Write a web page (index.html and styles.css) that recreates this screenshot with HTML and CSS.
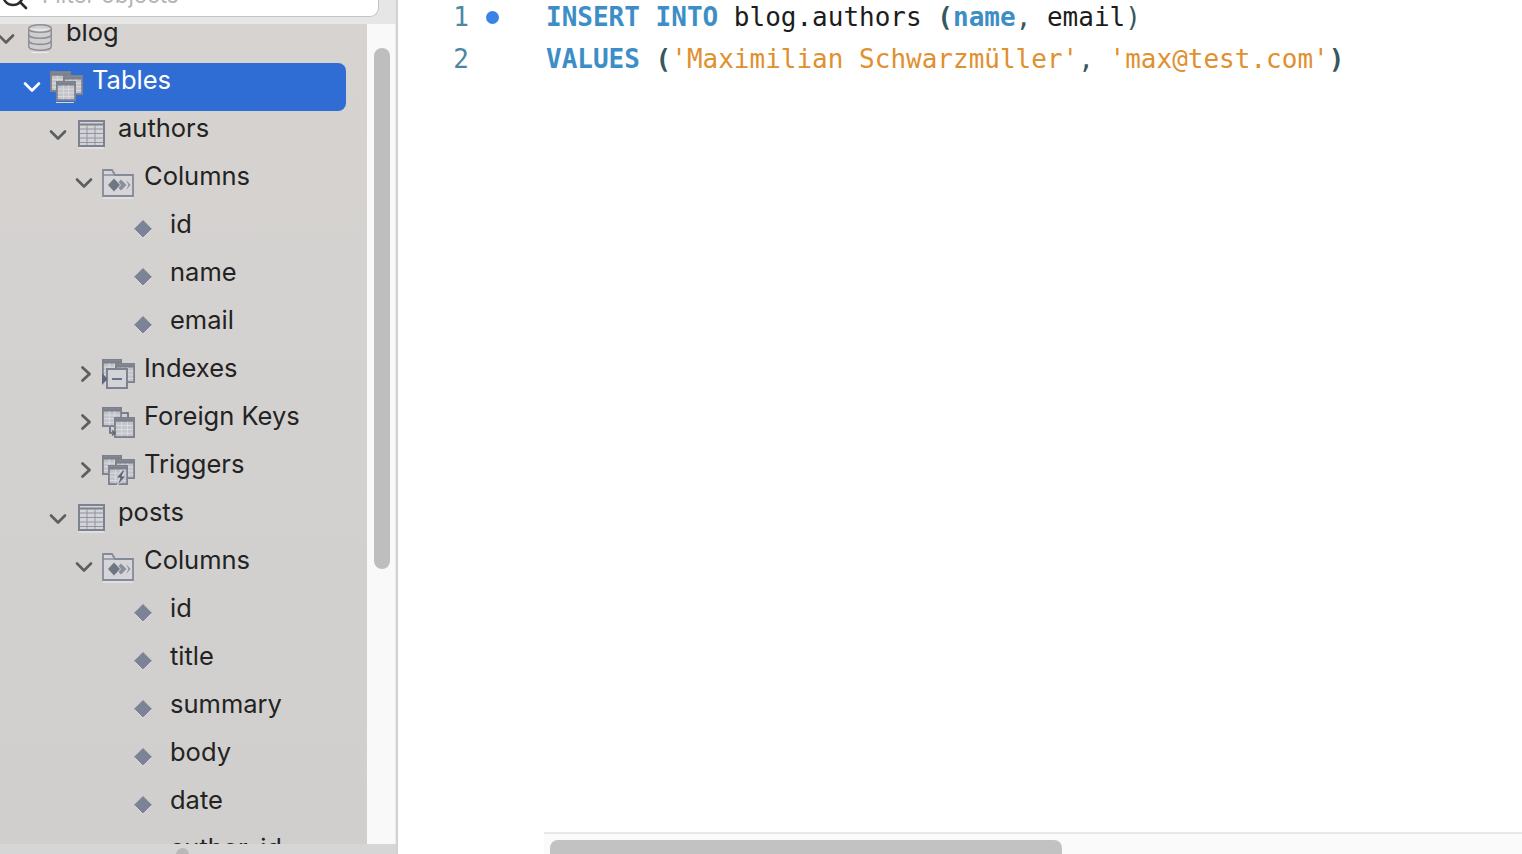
FILE: index.html
```html
<!DOCTYPE html>
<html lang="en">
<head>
<meta charset="utf-8">
<title>SQL editor</title>
<link rel="stylesheet" href="styles.css">
</head>
<body>
<svg class="defs" width="0" height="0" aria-hidden="true">
  <defs>
    <symbol id="down" viewBox="0 0 20 20"><path d="M3 6.5 L10 13.5 L17 6.5" fill="none" stroke="currentColor" stroke-width="2.6" stroke-linecap="round" stroke-linejoin="round"/></symbol>
    <symbol id="right" viewBox="0 0 20 20"><path d="M6.5 3.5 L13.5 10 L6.5 16.5" fill="none" stroke="currentColor" stroke-width="2.8" stroke-linecap="round" stroke-linejoin="round"/></symbol>
    <symbol id="db" viewBox="0 0 32 32">
      <path d="M4 6 C4 0.5 28 0.5 28 6 V25 C28 30.5 4 30.5 4 25Z" fill="#cfcfd1" stroke="#909094" stroke-width="1.6"/>
      <path d="M4 6 C4 11 28 11 28 6" fill="#e4e4e6" stroke="#909094" stroke-width="1.6"/>
      <path d="M4 12.5 C4 17.5 28 17.5 28 12.5 M4 19 C4 24 28 24 28 19" fill="none" stroke="#909094" stroke-width="1.8"/>
      <path d="M7 31.5 H25" stroke="#eeeeee" stroke-width="1"/>
    </symbol>
    <symbol id="grid" viewBox="0 0 22 22">
      <rect x="1" y="1" width="20" height="20" fill="#c2c4ca" stroke="#7d818c" stroke-width="2"/>
      <path d="M1 3.5 H21" stroke="#7d818c" stroke-width="3"/>
      <path d="M2 9 H20 M2 13 H20 M2 17 H20 M8 5 V20 M14 5 V20" stroke="#dcdde0" stroke-width="1"/>
    </symbol>
    <symbol id="table" viewBox="0 0 28 30">
      <rect x="1" y="2" width="25" height="25" fill="#d4d4d6" stroke="#7d8290" stroke-width="2"/>
      <path d="M1 5.5 H26" stroke="#7d8290" stroke-width="2"/>
      <path d="M2 10 H25 M2 14.5 H25 M2 19 H25 M2 23.5 H25 M9 6 V26 M17 6 V26" stroke="#8f95a3" stroke-width="1"/>
      <path d="M1 29 H26" stroke="#eeeeee" stroke-width="1"/>
    </symbol>
    <symbol id="tables" viewBox="0 0 34 32">
      <use href="#grid" x="1" y="0" width="21" height="21"/>
      <use href="#grid" x="14" y="4" width="20" height="20"/>
      <use href="#grid" x="7" y="10" width="20" height="20"/>
      <path d="M7 31.5 H25" stroke="#d8d8dc" stroke-width="1"/>
    </symbol>
    <symbol id="folder" viewBox="0 0 34 32">
      <path d="M2 29 V3 H11 L14 8 H32 V29Z" fill="#d6d6d9" stroke="#848a99" stroke-width="1.8"/>
      <path d="M2 8 H14" stroke="#848a99" stroke-width="1.4"/>
      <path d="M2 31 H32" stroke="#eeeeee" stroke-width="1"/>
      <path d="M13 11.5 L19 18 L13 24.5 L7 18Z" fill="#707686"/>
      <path d="M20 12.5 L25.5 18 L20 23.5 L17.5 21 L20 18 L17.5 15Z" fill="#8a8f9c"/>
      <path d="M25 13 L29.5 18 L25 23 L27.5 18Z" fill="#8a8f9c"/>
    </symbol>
    <symbol id="diamond" viewBox="0 0 20 20"><path d="M10 1 L19 10 L10 19 L1 10Z" fill="#7d8397"/><path d="M1.5 10.5 L10 19 L18.5 10.5" fill="none" stroke="#e6e6e6" stroke-width=".8"/></symbol>
    <symbol id="indexes" viewBox="0 0 34 32">
      <use href="#grid" x="1" y="0" width="20" height="20"/>
      <use href="#grid" x="14" y="4" width="20" height="20"/>
      <rect x="6" y="10" width="20" height="19" fill="#d2d3d7" stroke="#7d8290" stroke-width="2"/>
      <path d="M11 20 H21" stroke="#60667a" stroke-width="1.8"/>
      <path d="M1 14 L6.5 20 L1 26Z" fill="#60667a"/>
    </symbol>
    <symbol id="fkeys" viewBox="0 0 34 32">
      <use href="#grid" x="1" y="0" width="20" height="20"/>
      <use href="#grid" x="13" y="10" width="21" height="21"/>
      <path d="M9 20 V26 H14 M11 23.5 L14 26 L11 28.5 M21 6 H27 V10" fill="none" stroke="#60667a" stroke-width="1.6"/>
    </symbol>
    <symbol id="triggers" viewBox="0 0 34 32">
      <use href="#grid" x="1" y="0" width="20" height="20"/>
      <use href="#grid" x="14" y="4" width="20" height="20"/>
      <use href="#grid" x="7" y="10" width="20" height="20"/>
      <path d="M22 15 L15 23 H19 L16 31 L25 21 H21 L24 15Z" fill="#60667a" stroke="#e0e0e2" stroke-width=".8"/>
    </symbol>
  </defs>
</svg>

<div class="app">
  <aside class="sidebar">
    <div class="top">
      <div class="search">
        <svg class="lens" viewBox="0 0 28 28"><circle cx="13" cy="-3" r="10" fill="none" stroke="#2a2a2a" stroke-width="2.4"/><path d="M20 4 L26 10" stroke="#2a2a2a" stroke-width="2.6" stroke-linecap="round"/></svg>
        <span class="search-text">Filter objects</span>
      </div>
    </div>
    <div class="middle">
      <div class="tree">
        <div class="rows">
          <div class="row l0"><svg class="chev"><use href="#down"/></svg><span class="ico"><svg class="i-db"><use href="#db"/></svg></span><span class="label">blog</span></div>
          <div class="row l1 selected"><svg class="chev"><use href="#down"/></svg><span class="ico"><svg class="i-f"><use href="#tables"/></svg></span><span class="label">Tables</span></div>
          <div class="row l2"><svg class="chev"><use href="#down"/></svg><span class="ico"><svg class="i-t"><use href="#table"/></svg></span><span class="label">authors</span></div>
          <div class="row l3"><svg class="chev"><use href="#down"/></svg><span class="ico"><svg class="i-f"><use href="#folder"/></svg></span><span class="label">Columns</span></div>
          <div class="row l4"><span class="nochev"></span><span class="ico"><svg class="i-d"><use href="#diamond"/></svg></span><span class="label">id</span></div>
          <div class="row l4"><span class="nochev"></span><span class="ico"><svg class="i-d"><use href="#diamond"/></svg></span><span class="label">name</span></div>
          <div class="row l4"><span class="nochev"></span><span class="ico"><svg class="i-d"><use href="#diamond"/></svg></span><span class="label">email</span></div>
          <div class="row l3"><svg class="chev closed"><use href="#right"/></svg><span class="ico"><svg class="i-f"><use href="#indexes"/></svg></span><span class="label">Indexes</span></div>
          <div class="row l3"><svg class="chev closed"><use href="#right"/></svg><span class="ico"><svg class="i-f"><use href="#fkeys"/></svg></span><span class="label">Foreign Keys</span></div>
          <div class="row l3"><svg class="chev closed"><use href="#right"/></svg><span class="ico"><svg class="i-f"><use href="#triggers"/></svg></span><span class="label">Triggers</span></div>
          <div class="row l2"><svg class="chev"><use href="#down"/></svg><span class="ico"><svg class="i-t"><use href="#table"/></svg></span><span class="label">posts</span></div>
          <div class="row l3"><svg class="chev"><use href="#down"/></svg><span class="ico"><svg class="i-f"><use href="#folder"/></svg></span><span class="label">Columns</span></div>
          <div class="row l4"><span class="nochev"></span><span class="ico"><svg class="i-d"><use href="#diamond"/></svg></span><span class="label">id</span></div>
          <div class="row l4"><span class="nochev"></span><span class="ico"><svg class="i-d"><use href="#diamond"/></svg></span><span class="label">title</span></div>
          <div class="row l4"><span class="nochev"></span><span class="ico"><svg class="i-d"><use href="#diamond"/></svg></span><span class="label">summary</span></div>
          <div class="row l4"><span class="nochev"></span><span class="ico"><svg class="i-d"><use href="#diamond"/></svg></span><span class="label">body</span></div>
          <div class="row l4"><span class="nochev"></span><span class="ico"><svg class="i-d"><use href="#diamond"/></svg></span><span class="label">date</span></div>
          <div class="row l4"><span class="nochev"></span><span class="ico"><svg class="i-d"><use href="#diamond"/></svg></span><span class="label">author_id</span></div>
        </div>
      </div>
      <div class="vtrack"><div class="vthumb"></div></div>
    </div>
    <div class="hbar"><span class="hdot"></span></div>
  </aside>

  <main class="editor">
    <div class="code">
      <div class="line"><span class="num">1</span><span class="gutter"><span class="dot"></span></span><span class="src"><span class="kw">INSERT INTO</span> blog.authors <b class="pn">(</b><span class="kw">name</span><span class="pn">,</span> email<span class="pn">)</span></span></div>
      <div class="line"><span class="num">2</span><span class="gutter"></span><span class="src"><span class="kw">VALUES</span> <b class="pn">(</b><span class="str">'Maximilian Schwarzmüller'</span><span class="pn">,</span> <span class="str">'max@test.com'</span><b class="pn">)</b></span></div>
    </div>
    <div class="ebar"><div class="ethumb"></div></div>
  </main>
</div>
</body>
</html>
```
FILE: styles.css
```css
* { box-sizing: border-box; }
html, body { margin: 0; height: 100%; overflow: hidden; background: #fff; }
.defs { display: block; height: 0; }

.app { display: flex; height: 854px; }

.sidebar {
  width: 398px;
  flex: none;
  display: flex;
  flex-direction: column;
  border-right: 2px solid #d2d2d2;
  background: #e6e6e6;
  font-family: Inter, "Liberation Sans", sans-serif;
}

.top { height: 24px; flex: none; overflow: hidden; background: #e6e6e6; }
.search {
  width: 379px;
  height: 17px;
  background: #fff;
  border-radius: 0 0 9px 0;
  border: solid #c4c4c4;
  border-width: 0 1px 1px 0;
  display: flex;
  overflow: hidden;
}
.lens { width: 28px; height: 28px; flex: none; margin-top: -2px; overflow: hidden; }
.search-text {
  margin: -20px 0 0 14px;
  font-size: 22.4px;
  line-height: 30px;
  color: #b4b4b4;
  white-space: nowrap;
}

.middle { flex: 1; min-height: 0; display: flex; }
.tree {
  width: 367px;
  flex: none;
  overflow: hidden;
  background: linear-gradient(#d6d3d1, #d0cfcd);
}
.rows { margin-top: -9px; }

.row {
  height: 48px;
  display: flex;
  align-items: center;
  color: #232323;
  white-space: nowrap;
}
.l0 { padding-left: 0; }
.l1 { padding-left: 26px; }
.l2 { padding-left: 52px; }
.l3 { padding-left: 78px; }
.l4 { padding-left: 104px; }

.selected {
  width: 346px;
  background: #2f6dd5;
  border-radius: 0 8px 8px 0;
  color: #fff;
}

.chev, .nochev { width: 20px; height: 20px; flex: none; margin: 0 1px 0 -4px; color: #5e5e5e; }
.chev.closed { margin: -2px -1px 0 -2px; }
.selected .chev { color: #fff; }
.ico { width: 46px; height: 32px; flex: none; display: flex; align-items: center; justify-content: center; }
.ico svg { display: block; flex: none; }
.i-db { width: 30px; height: 32px; margin: -3px 1px 0 0; }
.i-t { width: 28px; height: 30px; margin-top: -2px; }
.i-f { width: 34px; height: 32px; }
.i-d { width: 20px; height: 20px; margin: -4px 2px 0 0; }
.label { font-size: 25.5px; line-height: 30px; margin: 0 0 14px 3px; }

.vtrack { flex: 1; background: #f9f9f9; padding: 24px 0 0 7px; border-right: 1px solid #eeeeee; }
.vthumb { width: 16px; height: 521px; border-radius: 8px; background: #bebebe; }

.hbar { height: 10px; flex: none; background: #d6d6d6; overflow: hidden; padding: 4px 0 0 176px; }
.hdot { display: block; width: 13px; height: 13px; border-radius: 50%; background: #b8b8b8; }

.editor { flex: 1; min-width: 0; display: flex; flex-direction: column; background: #fff; }
.code {
  flex: 1;
  min-height: 0;
  margin-top: -4px;
  font-family: "DejaVu Sans Mono", "Liberation Mono", monospace;
  font-size: 26px;
  line-height: 42px;
}
.line { display: flex; height: 42px; white-space: pre; }
.num { width: 71px; text-align: right; color: #4b87a3; }
.gutter { width: 77px; flex: none; display: flex; align-items: center; padding-left: 17px; }
.dot { width: 13px; height: 13px; border-radius: 50%; background: #3b82e6; }
.src { color: #1c1c1c; }
.kw { color: #3d8ec6; font-weight: 700; }
.str { color: #e0902e; }
.pn { color: #37585e; }

.ebar {
  height: 22px;
  flex: none;
  margin-left: 146px;
  background: #fafafa;
  border-top: 2px solid #e8e8e8;
  padding: 6px 0 0 6px;
  overflow: hidden;
}
.ethumb { width: 512px; height: 28px; border-radius: 8px 8px 0 0 / 8px 8px 0 0; background: #c2c2c2; }
```
